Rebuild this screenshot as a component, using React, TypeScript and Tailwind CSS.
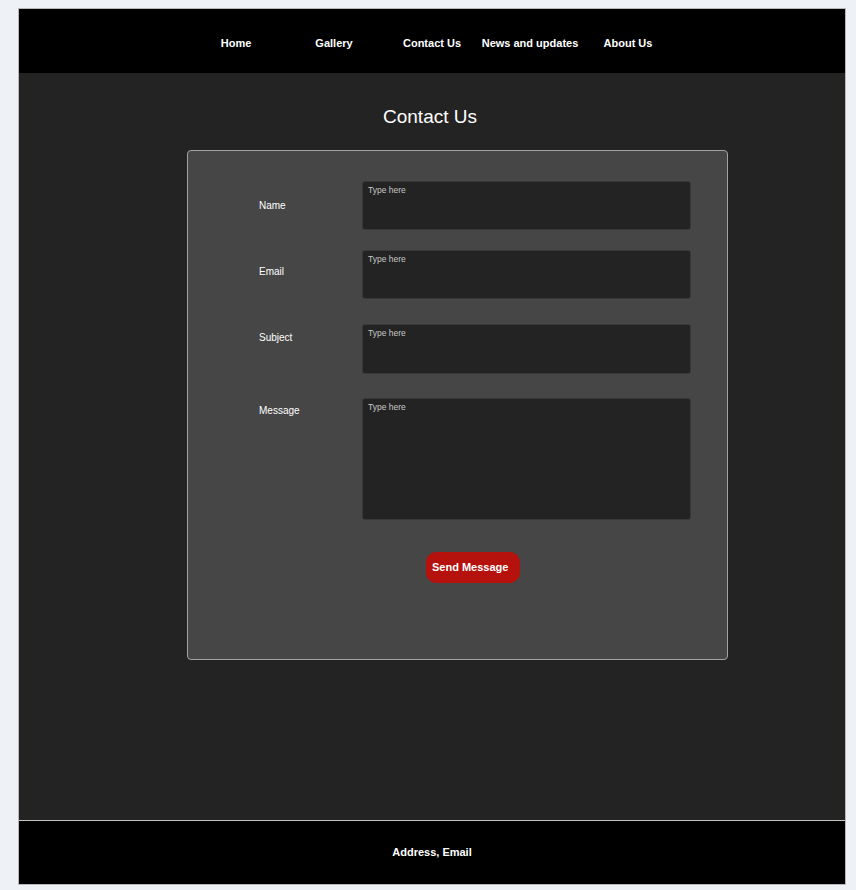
const navItems = ['Home', 'Gallery', 'Contact Us', 'News and updates', 'About Us'];

const fields = [
  { label: 'Name', labelPad: 'pt-[19px]', box: 'h-[49px]', gap: 'mt-0' },
  { label: 'Email', labelPad: 'pt-[16px]', box: 'h-[49px]', gap: 'mt-[20px]' },
  { label: 'Subject', labelPad: 'pt-[8px]', box: 'h-[50px]', gap: 'mt-[25px]' },
  { label: 'Message', labelPad: 'pt-[7px]', box: 'h-[122px]', gap: 'mt-[24px]' },
];

export default function App() {
  return (
    <div className="min-h-screen bg-[#eef1f6] pt-[8px] pb-[5px] font-['Liberation_Sans',Arial,sans-serif]">
      <div className="ml-[18px] w-[828px] border border-[#b8b8b8] flex flex-col">
        <header className="h-[64px] bg-black flex items-center justify-center pt-[4px]">
          <nav className="flex">
            {navItems.map((item) => (
              <a key={item} className="w-[98px] text-center text-[11px] font-bold text-white">
                {item}
              </a>
            ))}
          </nav>
        </header>

        <main className="h-[747px] bg-[#232323] pt-[33px] flex flex-col items-center">
          <h1 className="text-[19px] leading-[22px] text-white pr-[4px]">Contact Us</h1>
          <div className="mt-[22px] self-start ml-[168px] w-[541px] h-[510px] bg-[#464646] border border-[#a3a3a3] rounded-[4px] pt-[30px] pl-[71px] pr-[36px]">
            {fields.map((f) => (
              <div key={f.label} className={`flex ${f.gap}`}>
                <label className={`w-[103px] shrink-0 text-[10px] leading-[12px] text-white ${f.labelPad}`}>
                  {f.label}
                </label>
                <div className={`flex-1 ${f.box} bg-[#232323] border border-[#383838] rounded-[3px] px-[5px] pt-[2px] text-[8.5px] leading-[12px] text-[#c8c8c8]`}>
                  Type here
                </div>
              </div>
            ))}
            <div className="mt-[32px] flex pl-[167px]">
              <button className="h-[31px] w-[94px] rounded-[10px] bg-[#b5110d] text-left pl-[6px] text-[11px] font-bold text-white">
                Send Message
              </button>
            </div>
          </div>
        </main>

        <footer className="h-[64px] bg-black border-t border-[#c4c4c4] flex items-center justify-center">
          <span className="text-[11px] font-bold text-white">Address, Email</span>
        </footer>
      </div>
    </div>
  );
}
